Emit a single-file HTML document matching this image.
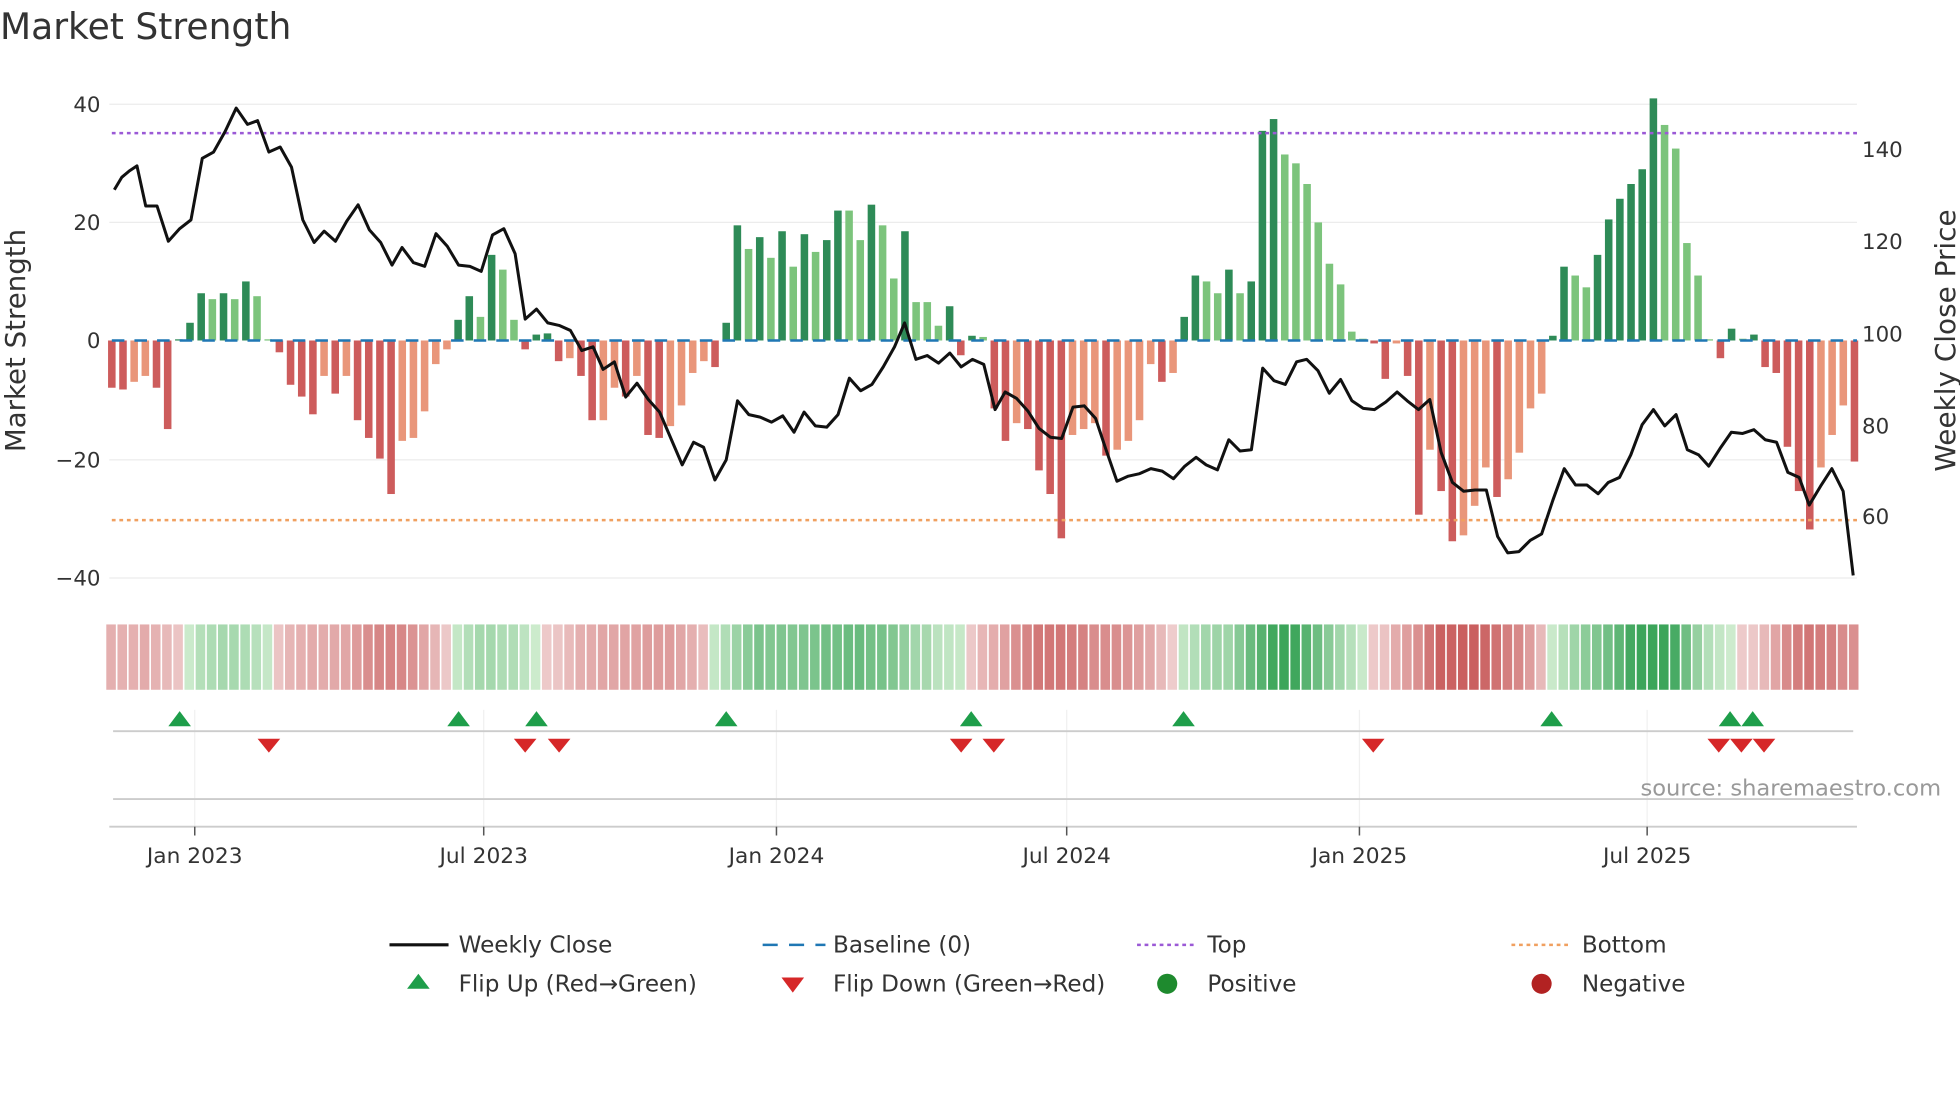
<!DOCTYPE html>
<html><head><meta charset="utf-8"><style>
html,body{margin:0;padding:0;background:#fff;width:1960px;height:1102px;overflow:hidden}
svg{display:block}
text{font-family:"DejaVu Sans","Liberation Sans",sans-serif;fill:#333}
</style></head><body>
<svg id="c" width="1960" height="1102" viewBox="0 0 1560 877.1" xmlns="http://www.w3.org/2000/svg">
<rect width="1560" height="878" fill="#fff"/>
<text x="0" y="31" font-size="28.7" fill="#333">Market Strength</text>
<g id="grid" stroke="#ececec" stroke-width="1">
<line x1="87" x2="1478" y1="83" y2="83"/><line x1="87" x2="1478" y1="177" y2="177"/>
<line x1="87" x2="1478" y1="366" y2="366"/><line x1="87" x2="1478" y1="460" y2="460"/>
</g>
<g id="bars"></g>
<line x1="89" x2="1478" y1="271" y2="271" stroke="#1f77b4" stroke-width="2" stroke-dasharray="10,8"/>
<line x1="89" x2="1478" y1="106" y2="106" stroke="#9b59d6" stroke-width="2" stroke-dasharray="3,3"/>
<line x1="89" x2="1478" y1="414" y2="414" stroke="#f0a060" stroke-width="2" stroke-dasharray="3,3"/>
<polyline id="line" fill="none" stroke="#111" stroke-width="2.4" stroke-linejoin="round"/>
<g font-size="17" text-anchor="end">
<text x="80" y="89">40</text><text x="80" y="183">20</text><text x="80" y="277">0</text><text x="80" y="372">−20</text><text x="80" y="466">−40</text>
</g>
<g font-size="17">
<text x="1482" y="125">140</text><text x="1482" y="198">120</text><text x="1482" y="272">100</text><text x="1482" y="345">80</text><text x="1482" y="417">60</text>
</g>
<text transform="translate(20,271) rotate(-90)" font-size="22" text-anchor="middle">Market Strength</text>
<text transform="translate(1556,271) rotate(-90)" font-size="22.2" text-anchor="middle">Weekly Close Price</text>
<g id="heat"></g>
<g stroke="#f0f0f0" stroke-width="1">
<line x1="155" x2="155" y1="565" y2="658"/><line x1="385" x2="385" y1="565" y2="658"/><line x1="618" x2="618" y1="565" y2="658"/>
<line x1="849" x2="849" y1="565" y2="658"/><line x1="1082" x2="1082" y1="565" y2="658"/><line x1="1311" x2="1311" y1="565" y2="658"/>
</g>
<line x1="90" x2="1475" y1="582" y2="582" stroke="#ccc" stroke-width="1.5"/>
<line x1="90" x2="1475" y1="636" y2="636" stroke="#ccc" stroke-width="1.5"/>
<line x1="87" x2="1478" y1="658" y2="658" stroke="#ccc" stroke-width="1.5"/>
<g stroke="#555" stroke-width="1.2">
<line x1="155" x2="155" y1="658" y2="665"/><line x1="385" x2="385" y1="658" y2="665"/><line x1="618" x2="618" y1="658" y2="665"/>
<line x1="849" x2="849" y1="658" y2="665"/><line x1="1082" x2="1082" y1="658" y2="665"/><line x1="1311" x2="1311" y1="658" y2="665"/>
</g>
<g id="mk"></g>
<text x="1545" y="633" font-size="18" fill="#999" text-anchor="end" style="fill:#999">source: sharemaestro.com</text>
<g font-size="17.3" text-anchor="middle">
<text x="155" y="687">Jan 2023</text><text x="385" y="687">Jul 2023</text><text x="618" y="687">Jan 2024</text>
<text x="849" y="687">Jul 2024</text><text x="1082" y="687">Jan 2025</text><text x="1311" y="687">Jul 2025</text>
</g>
<g font-size="18.4">
<line x1="310" x2="357" y1="752" y2="752" stroke="#111" stroke-width="2.5"/><text x="365" y="758">Weekly Close</text>
<line x1="607" x2="657" y1="752" y2="752" stroke="#1f77b4" stroke-width="2" stroke-dasharray="12,9"/><text x="663" y="758">Baseline (0)</text>
<line x1="905" x2="950" y1="752" y2="752" stroke="#9b59d6" stroke-width="2" stroke-dasharray="3,3"/><text x="961" y="758">Top</text>
<line x1="1203" x2="1248" y1="752" y2="752" stroke="#f0a060" stroke-width="2" stroke-dasharray="3,3"/><text x="1259" y="758">Bottom</text>
<polygon points="324,787 342,787 333,775" fill="#1e9e4a"/><text x="365" y="789">Flip Up (Red→Green)</text>
<polygon points="622,778 640,778 631,790" fill="#d62728"/><text x="663" y="789">Flip Down (Green→Red)</text>
<circle cx="929" cy="783" r="8" fill="#1e8a2e"/><text x="961" y="789">Positive</text>
<circle cx="1227" cy="783" r="8" fill="#b22222"/><text x="1259" y="789">Negative</text>
</g>
</svg>
<script>
var V=[-8,-8.3,-7,-6,-8,-15,0.2,3,8,7,8,7,10,7.5,0.2,-2,-7.5,-9.5,-12.5,-6,-9,-6,-13.5,-16.5,-20,-26,-17,-16.5,-12,-4,-1.5,3.5,7.5,4,14.5,12,3.5,-1.5,1,1.2,-3.5,-3,-6,-13.5,-13.5,-8,-9.5,-6,-16,-16.5,-14.5,-11,-5.5,-3.5,-4.5,3,19.5,15.5,17.5,14,18.5,12.5,18,15,17,22,22,17,23,19.5,10.5,18.5,6.5,6.5,2.5,5.8,-2.5,0.8,0.6,-11.5,-17,-14,-15,-22,-26,-33.5,-16,-15,-14,-19.5,-18.5,-17,-13.5,-4,-7,-5.5,4,11,10,8,12,8,10,35.5,37.5,31.5,30,26.5,20,13,9.5,1.5,0.3,-0.5,-6.5,-0.5,-6,-29.5,-18.5,-25.5,-34,-33,-28,-21.5,-26.5,-23.5,-19,-11.5,-9,0.8,12.5,11,9,14.5,20.5,24,26.5,29,41,36.5,32.5,16.5,11,0.2,-3,2,0.3,1,-4.5,-5.5,-18,-25.5,-32,-21.5,-16,-11,-20.5];
var NS="http://www.w3.org/2000/svg";
function el(t,a,p){var e=document.createElementNS(NS,t);for(var k in a)e.setAttribute(k,a[k]);p.appendChild(e);return e;}
var bars=document.getElementById('bars'),heat=document.getElementById('heat');
var dx=(1476-89)/156;
function mix(a,b,t){var r=[];for(var i=0;i<3;i++)r.push(Math.round(a[i]+(b[i]-a[i])*t));return 'rgb('+r.join(',')+')';}
for(var i=0;i<V.length;i++){
 var v=V[i],p=i?V[i-1]:0,x=89+dx*i,y0=271,y=271-v*4.7;
 var c;
 if(v>=0)c=(v>p)?'#2e8b57':'#7cc47c';else c=(v<p)?'#cd5c5c':'#e9967a';
 el('rect',{x:x-3,y:Math.min(y,y0),width:6,height:Math.max(Math.abs(y-y0),1),fill:c},bars);
 var s=0,n=0;for(var j=Math.max(0,i-2);j<=Math.min(V.length-1,i+2);j++){s+=V[j];n++;}s/=n;
 var t=Math.min(Math.abs(s)/30,1),hc;
 if(s>=0)hc=mix([205,235,205],[60,165,90],t);else hc=mix([238,205,205],[200,90,90],t);
 el('rect',{x:x-4.4,y:497,width:7.6,height:52,fill:hc},heat);
}
var P=[[91,151],[97,141],[103,136],[109,132],[116,164],[125,164],[134,192],[143,182],[152,175],[161,126],[170,121],[179,105],[188,86],[197,99],[205,96],[214,121],[223,117],[232,133],[241,175],[250,193],[258,184],[267,192],[276,176],[285,163],[294,183],[303,193],[312,211],[320,197],[329,209],[338,212],[347,186],[356,196],[365,211],[374,212],[383,216],[392,187],[401,182],[410,202],[418,254],[427,246],[436,257],[445,259],[454,263],[463,279],[472,276],[480,294],[489,288],[498,316],[507,305],[516,318],[525,328],[534,349],[543,370],[552,352],[560,356],[569,382],[578,366],[587,319],[596,330],[605,332],[614,336],[623,331],[632,344],[640,328],[649,339],[658,340],[667,330],[676,301],[685,311],[694,306],[703,292],[712,276],[720,257],[729,286],[738,283],[747,289],[756,281],[765,292],[774,286],[783,290],[792,326],[800,312],[809,317],[818,327],[827,341],[836,348],[845,349],[854,324],[863,323],[872,333],[880,357],[889,383],[898,379],[907,377],[916,373],[925,375],[934,381],[943,371],[952,364],[960,370],[969,374],[978,350],[987,359],[996,358],[1005,293],[1014,303],[1023,306],[1032,288],[1040,286],[1049,295],[1058,313],[1067,302],[1076,319],[1085,325],[1094,326],[1103,320],[1112,312],[1120,319],[1129,326],[1138,318],[1147,360],[1156,384],[1165,391],[1174,390],[1183,390],[1192,427],[1200,440],[1209,439],[1218,430],[1227,425],[1236,398],[1245,373],[1254,386],[1263,386],[1272,393],[1280,384],[1289,380],[1298,362],[1307,338],[1316,326],[1325,339],[1334,330],[1343,358],[1352,362],[1360,371],[1369,357],[1378,344],[1387,345],[1396,342],[1405,350],[1414,352],[1423,376],[1432,380],[1440,402],[1449,387],[1458,373],[1467,391],[1475,458]];
document.getElementById('line').setAttribute('points',P.map(function(q){return q.join(',')}).join(' '));
var mk=document.getElementById('mk');
[143,365,427,578,773,942,1235,1377,1395].forEach(function(x){el('polygon',{points:(x-9)+',578 '+(x+9)+',578 '+x+',566',fill:'#1e9e4a'},mk);});
[214,418,445,765,791,1093,1368,1386,1404].forEach(function(x){el('polygon',{points:(x-9)+',588 '+(x+9)+',588 '+x+',599',fill:'#d62728'},mk);});
</script>
</body></html>
